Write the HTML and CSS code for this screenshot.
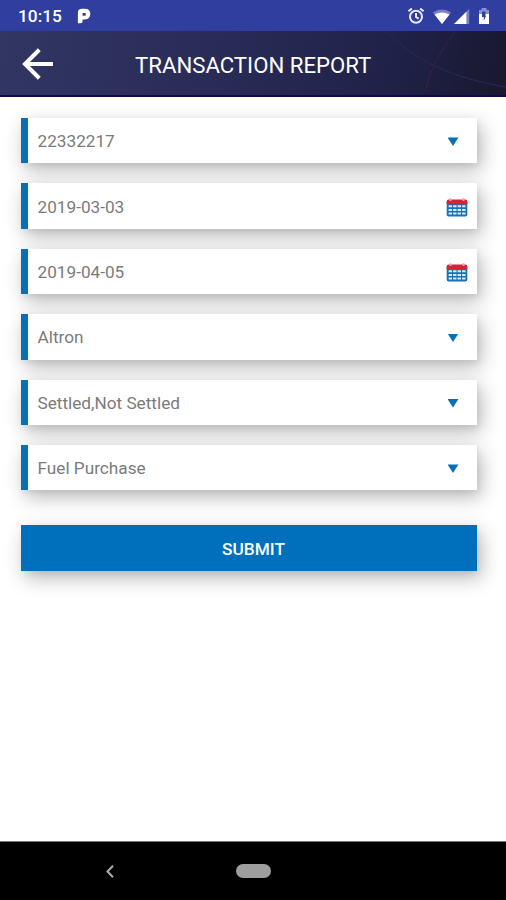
FILE: index.html
```html
<!DOCTYPE html>
<html lang="en">
<head>
<meta charset="utf-8">
<title>Transaction Report</title>
<link rel="stylesheet" href="styles.css">
</head>
<body>
<svg class="defs" width="0" height="0" aria-hidden="true">
  <symbol id="calendar" viewBox="0 0 22 19">
    <rect x=".7" y="2" width="20.6" height="16.6" rx="2" fill="#1671b8"/>
    <path d="M.7 6.3V3.5Q.7 1.5 2.7 1.5H19.3Q21.3 1.5 21.3 3.5V6.3Z" fill="#dc2034"/>
    <path d="M4.5 .3v2.6M17.5 .3v2.6" stroke="#e9a4ae" stroke-width="2"/>
    <path d="M2.6 8.3H19.6M2.6 12H19.6M2.6 15.5H19.6" stroke="#d5ecf9" stroke-width="2.1" stroke-dasharray="3.4 1.1"/>
  </symbol>
</svg>
<div class="screen">
  <div class="status">
    <span class="time">10:15</span>
    <svg class="pandora" viewBox="0 0 14 16"><path fill="#fff" fill-rule="evenodd" d="M5 .8H7.8Q13.3 .8 13.3 6T7.8 11.5H5.6V13Q5.6 15.2 3.6 15.2H.9V4.8Q.9 .8 5 .8ZM5.6 5V7.8H7.4Q9 7.8 9 6.4T7.4 5Z"/></svg>
    <div class="indicators">
      <svg class="alarm" viewBox="0 0 18 18" fill="none" stroke="#e8eaff" stroke-width="2"><circle cx="9" cy="9.7" r="6"/><path d="M9 6v4l2.7 1.6M1.4 4.3 4.9 1.4M16.6 4.3 13.1 1.4"/></svg>
      <svg class="wifi" viewBox="0 0 18 15"><path fill="#7783c9" d="M0 3.5Q9-2.5 18 3.5L9 15Z"/><path fill="#fff" d="M1.5 5.5Q9 1.5 16.5 5.5L9 15Z"/></svg>
      <svg class="signal" viewBox="0 0 16 15"><path fill="#7783c9" d="M12.5 2.5 15.2 0V15H12.5Z"/><path fill="#fff" d="M0 15 12.5 2.5V15Z"/></svg>
      <svg class="battery" viewBox="0 0 12 16"><path fill="#8791cf" d="M3.5 0h5v2H11v5H1V2h2.5Z"/><path fill="#fff" d="M1 6h10v10H1Z"/><path fill="#303f9f" d="M4 3.5h3.5V8H8L5.8 12.5V9H4Z"/></svg>
    </div>
  </div>
  <header class="appbar">
    <svg class="streaks" viewBox="0 0 130 66" fill="none"><path d="M10 0Q50 43 130 56" stroke="#292955"/><path d="M80 0Q56 28 49 61" stroke="#381e49"/></svg>
    <svg class="back" viewBox="0 0 32 32" fill="none" stroke="#fff" stroke-width="4.1"><path d="M31 16H3M17.3 1.7 3 16 17.3 30.3"/></svg>
    <h1>TRANSACTION REPORT</h1>
  </header>
  <main class="form">
    <div class="field"><span>22332217</span><i class="caret"></i></div>
    <div class="field"><span>2019-03-03</span><svg class="cal"><use href="#calendar"/></svg></div>
    <div class="field"><span>2019-04-05</span><svg class="cal"><use href="#calendar"/></svg></div>
    <div class="field"><span>Altron</span><i class="caret"></i></div>
    <div class="field"><span>Settled,Not Settled</span><i class="caret"></i></div>
    <div class="field"><span>Fuel Purchase</span><i class="caret"></i></div>
    <button class="submit">SUBMIT</button>
  </main>
  <nav class="navbar">
    <svg class="navback" viewBox="0 0 8 13" fill="none" stroke="#aaa" stroke-width="2.1"><path d="M7 .8 1.5 6.5 7 12.2"/></svg>
    <span class="pill"></span>
  </nav>
</div>
</body>
</html>
```
FILE: styles.css
```css
* { box-sizing: border-box; }
body { margin: 0; background: #fff; font-family: Roboto, "Liberation Sans", sans-serif; }
.defs { position: absolute; }
.screen { display: flex; flex-direction: column; width: 506px; height: 900px; overflow: hidden; }

.status { display: flex; align-items: center; height: 31px; padding: 1px 16px 0 18px; background: #303f9f; color: #fff; }
.time { width: 59px; font-size: 17.3px; font-weight: 500; line-height: 20px; }
.pandora { width: 14px; height: 16px; }
.indicators { display: flex; align-items: center; margin-left: auto; }
.alarm { width: 18px; height: 18px; margin-right: 8px; }
.wifi { width: 18px; height: 15px; margin-right: 3px; }
.signal { width: 16px; height: 15px; margin-right: 8px; }
.battery { width: 12px; height: 16px; }

.appbar { position: relative; display: flex; align-items: center; height: 66px; padding-left: 22px; background: linear-gradient(100deg, #313663 0%, #282b55 45%, #20224a 75%, #19182f 100%); border-bottom: 2px solid #0d0b48; }
.streaks { position: absolute; top: 0; right: 0; width: 130px; height: 66px; }
.back { width: 32px; height: 32px; margin-top: 2px; }
h1 { position: relative; margin: 3px 0 0 81px; color: #fff; font-size: 22.2px; font-weight: 400; line-height: 28px; white-space: nowrap; }

.form { flex: 1; display: flex; flex-direction: column; gap: 20px; padding: 21px 29px 0 21px; isolation: isolate; }
.field, .submit { position: relative; flex: none; height: 45.4px; }
.field { display: flex; align-items: center; justify-content: space-between; padding: 0 9px 0 10px; border-left: 7px solid #0870b9; background: #fff; color: #7b7b7b; font-size: 17.2px; }
.field span { margin-top: 1px; margin-left: -.5px; }
.field::before { content: ""; position: absolute; z-index: -1; inset: 0 0 0 -7px; box-shadow: 4px 7px 20px rgba(0, 0, 0, .28), 2px 3px 6px rgba(0, 0, 0, .06); }
.caret { width: 11px; height: 8.5px; margin-right: 9.5px; margin-top: 2px; background: #0870b9; clip-path: polygon(0 0, 100% 0, 50% 100%); }
.cal { width: 22px; height: 19px; margin-top: 3px; }
.submit { z-index: -1; margin-top: 15px; padding: 2px 0 0 9px; border: 0; background: #0070bc; box-shadow: 4px 7px 20px rgba(0, 0, 0, .28), 2px 3px 6px rgba(0, 0, 0, .06); color: #fff; font: 500 17.3px Roboto, "Liberation Sans", sans-serif; }

.navbar { display: flex; align-items: center; height: 59px; padding-left: 106px; border-top: 1px solid #777; background: #000; }
.navback { width: 8px; height: 13px; }
.pill { width: 35px; height: 14px; margin-left: 122px; border-radius: 7px; background: #9e9e9e; }
```
